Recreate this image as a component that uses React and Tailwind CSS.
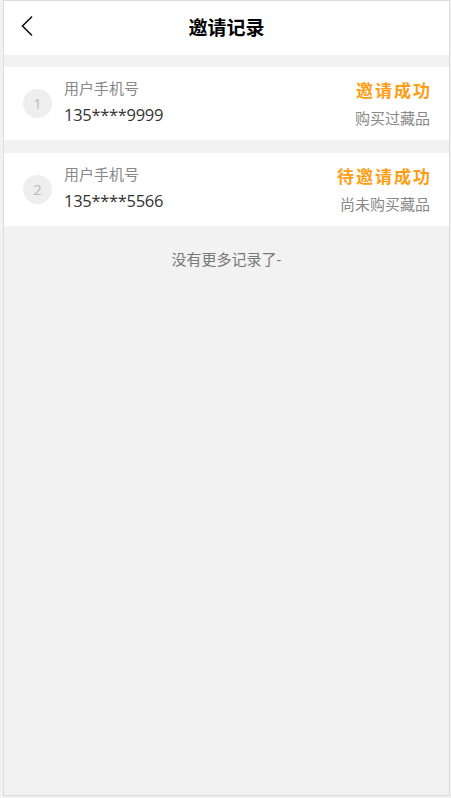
import React from "react";

const rows = [
  { n: 1, phone: "135****9999", status: "邀请成功", note: "购买过藏品" },
  { n: 2, phone: "135****5566", status: "待邀请成功", note: "尚未购买藏品" },
];

export default function App() {
  return (
    <div
      className="w-[451px] h-[798px] bg-[#f2f2f2] pl-[3px] pr-[1px] pb-[2px] flex flex-col"
      style={{ fontFamily: '"Open Sans", "Noto Sans CJK SC", sans-serif' }}
    >
      <div className="flex-1 flex flex-col border border-[#dcdcdc] bg-[#f2f2f2]">
        <div className="h-[54px] bg-white flex items-center relative shrink-0">
          <div className="absolute left-[16px] top-[14px]">
            <svg width="14" height="22" viewBox="0 0 14 22" fill="none">
              <path d="M12 1.5 L2.5 11 L12 20.5" stroke="#111" strokeWidth="1.6" />
            </svg>
          </div>
          <div className="flex-1 text-center text-[19px] font-bold text-black leading-none">邀请记录</div>
        </div>
        <div className="flex flex-col gap-[13px] pt-[12px]">
          {rows.map((r) => (
            <div key={r.n} className="h-[73px] bg-white flex items-center pl-[19px] pr-[19px]">
              <div className="w-[29px] h-[29px] rounded-full bg-[#eeeeee] flex items-center justify-center text-[15px] text-[#bbbbbb]">
                {r.n}
              </div>
              <div className="ml-[12px] flex flex-col">
                <div className="text-[15px] text-[#888888] leading-[20px] mt-[-2px]">用户手机号</div>
                <div className="text-[16.5px] text-[#333333] leading-[24px] mt-[5px] tracking-[-0.3px]">{r.phone}</div>
              </div>
              <div className="ml-auto flex flex-col items-end">
                <div className="text-[17px] font-bold text-[#ff9d14] leading-[22px] tracking-[2px] mr-[-2px]">{r.status}</div>
                <div className="text-[15px] text-[#888888] leading-[20px] mt-[6px]">{r.note}</div>
              </div>
            </div>
          ))}
        </div>
        <div className="text-center text-[15px] text-[#777777] mt-[22px]">没有更多记录了-</div>
      </div>
    </div>
  );
}
